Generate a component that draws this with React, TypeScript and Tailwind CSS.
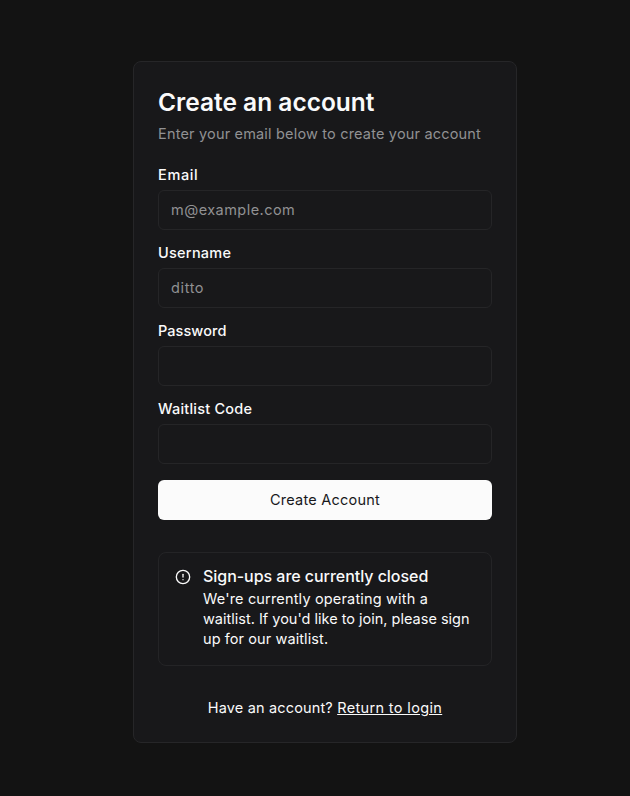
import { CircleAlert } from "lucide-react";

interface FieldProps {
  id: string;
  label: string;
  labelClass: string;
  type?: string;
  placeholder?: string;
  inputClass?: string;
}

function Field({ id, label, labelClass, type = "text", placeholder, inputClass = "" }: FieldProps) {
  return (
    <div className="flex flex-col gap-2">
      <label htmlFor={id} className={`text-[14.5px] leading-[14px] font-medium ${labelClass}`}>
        {label}
      </label>
      <input
        id={id}
        type={type}
        placeholder={placeholder}
        className={`h-10 w-full rounded-md border border-[#252527] bg-transparent px-3 pb-0.5 text-[14.5px] outline-none placeholder:text-[#919193] ${inputClass}`}
      />
    </div>
  );
}

export default function App() {
  return (
    <main className="flex min-h-screen justify-center bg-[#131313] pt-[61px] pl-5 font-['Inter','Liberation_Sans',sans-serif] text-[#fafafa]">
      <section className="flex h-[682px] w-96 flex-col rounded-lg border border-[#262628] bg-[#18181a] p-6">
        <header className="flex flex-col gap-1.5 whitespace-nowrap">
          <h1 className="text-[24.5px] leading-8 font-semibold">Create an account</h1>
          <p className="text-[14.5px] leading-5 tracking-[0.18px] text-[#919193]">
            Enter your email below to create your account
          </p>
        </header>

        <form className="mt-6 flex flex-col gap-4" onSubmit={(e) => e.preventDefault()}>
          <Field
            id="email"
            type="email"
            label="Email"
            labelClass="tracking-[0.65px]"
            placeholder="m@example.com"
            inputClass="tracking-[0.46px]"
          />
          <Field
            id="username"
            label="Username"
            labelClass="tracking-[0.26px]"
            placeholder="ditto"
            inputClass="tracking-[0.62px]"
          />
          <Field id="password" type="password" label="Password" labelClass="tracking-[0.06px]" />
          <Field id="code" label="Waitlist Code" labelClass="tracking-[0.22px]" />
          <button className="h-10 rounded-md bg-[#fbfbfb] text-[14.5px] tracking-[0.24px] text-[#18181b]">
            Create Account
          </button>
        </form>

        <div role="alert" className="mt-8 flex gap-3 rounded-lg border border-[#242426] p-4">
          <CircleAlert className="size-4 shrink-0" />
          <div className="whitespace-nowrap">
            <h5 className="-mt-px mb-[5px] text-base leading-none font-medium tracking-[-0.04px]">
              Sign-ups are currently closed
            </h5>
            <p className="text-[14.5px] leading-5">
              <span className="block tracking-[0.17px]">We're currently operating with a</span>
              <span className="block">waitlist. If you'd like to join, please sign</span>
              <span className="block tracking-[0.09px]">up for our waitlist.</span>
            </p>
          </div>
        </div>

        <p className="mt-8 text-center text-[14.5px] leading-5 whitespace-nowrap">
          <span className="tracking-[0.16px]">Have an account? </span>
          <a href="#" className="tracking-[0.35px] underline">Return to login</a>
        </p>
      </section>
    </main>
  );
}
